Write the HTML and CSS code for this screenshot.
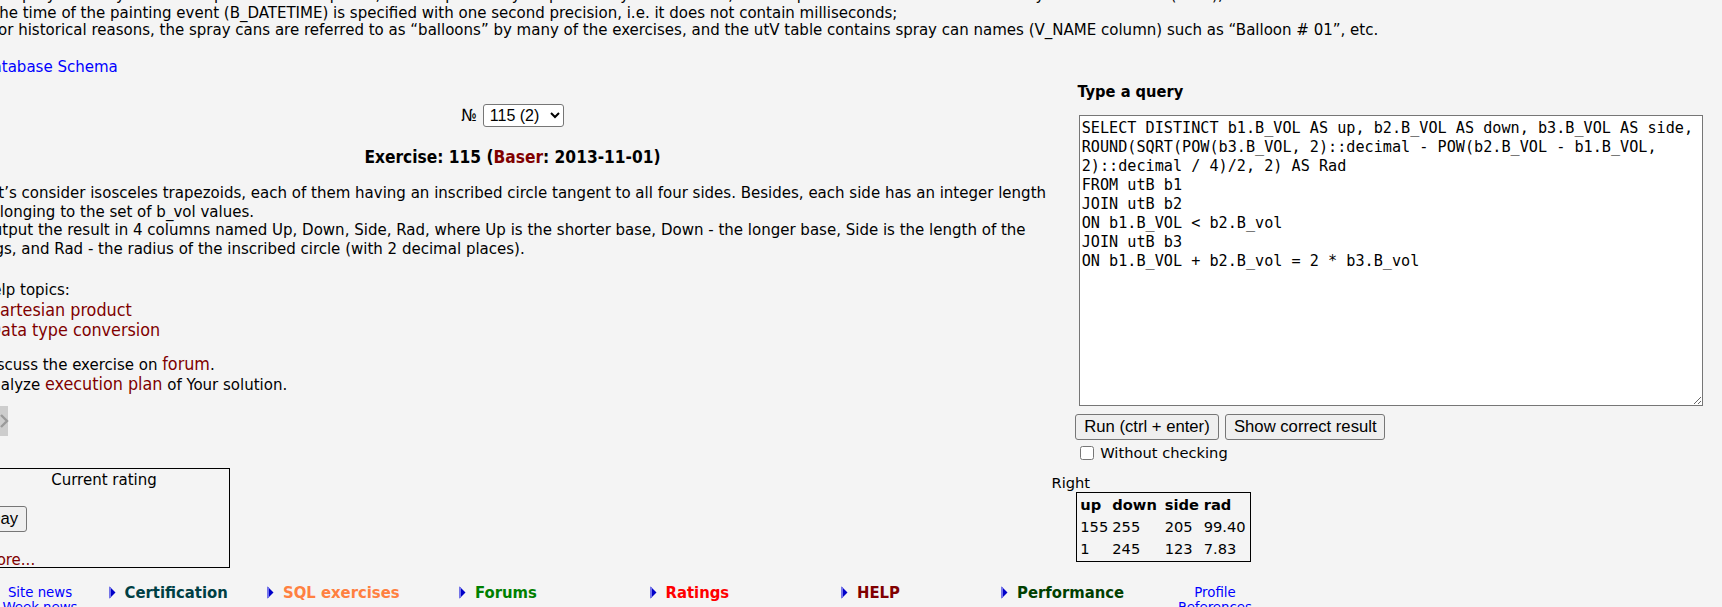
FILE: index.html
```html
<!DOCTYPE html>
<html lang="en">
<head>
<meta charset="utf-8">
<title>SQL exercises - Exercise 115</title>
<link rel="stylesheet" href="styles.css">
</head>
<body>
<div class="page">
  <div class="desc">
    <div class="dl">- a spray can may be used to paint several squares, and a square may be painted by several cans, but the paint volume of each colour may not exceed 255 (0xFF);</div>
    <div class="dl">The time of the painting event (B_DATETIME) is specified with one second precision, i.e. it does not contain milliseconds;</div>
    <div class="dl">For historical reasons, the spray cans are referred to as “balloons” by many of the exercises, and the utV table contains spray can names (V_NAME column) such as “Balloon # 01”, etc.</div>
  </div>
  <div class="schema"><a href="#">Database Schema</a></div>

  <div class="main">
    <div class="left">
      <div class="selrow">
        <span class="num">№</span>
        <select class="exsel"><option>115 (2)</option></select>
      </div>
      <div class="title">Exercise: 115 (<a class="author" href="#">Baser</a>: 2013-11-01)</div>
      <p class="task">Let’s consider isosceles trapezoids, each of them having an inscribed circle tangent to all four sides. Besides, each side has an integer length<br>belonging to the set of b_vol values.<br>Output the result in 4 columns named Up, Down, Side, Rad, where Up is the shorter base, Down - the longer base, Side is the length of the<br>legs, and Rad - the radius of the inscribed circle (with 2 decimal places).</p>
      <div class="help-label">Help topics:</div>
      <div class="topics">
        <a class="mlink" href="#">Cartesian product</a><br>
        <a class="mlink" href="#">Data type conversion</a>
      </div>
      <div class="discuss">
        <div>Discuss the exercise on <a class="mlink" href="#">forum</a>.</div>
        <div>Analyze <a class="mlink" href="#">execution plan</a> of Your solution.</div>
      </div>
      <div class="nextbtn">
        <svg class="chev" width="10" height="16" viewBox="0 0 10 16"><path d="M2 2 L8 8 L2 14" fill="none" stroke="#9a9a9a" stroke-width="2.4"/></svg>
      </div>
      <div class="rating">
        <div class="rt-title">Current rating</div>
        <button class="day">Day</button>
        <div class="more"><a class="mlink2" href="#">more...</a></div>
      </div>
    </div>

    <div class="right">
      <div class="form">
        <div class="tq">Type a query</div>
        <textarea class="query" spellcheck="false">SELECT DISTINCT b1.B_VOL AS up, b2.B_VOL AS down, b3.B_VOL AS side,
ROUND(SQRT(POW(b3.B_VOL, 2)::decimal - POW(b2.B_VOL - b1.B_VOL,
2)::decimal / 4)/2, 2) AS Rad
FROM utB b1
JOIN utB b2
ON b1.B_VOL &lt; b2.B_vol
JOIN utB b3
ON b1.B_VOL + b2.B_vol = 2 * b3.B_vol</textarea>
        <div class="btns">
          <button class="btn run">Run (ctrl + enter)</button>
          <button class="btn show">Show correct result</button>
        </div>
        <label class="chk"><input type="checkbox" class="cb"><span>Without checking</span></label>
      </div>
      <div class="rlabel">Right</div>
      <table class="res">
        <tr><th class="c1">up</th><th class="c2">down</th><th class="c3">side</th><th class="c4">rad</th></tr>
        <tr><td>155</td><td>255</td><td>205</td><td>99.40</td></tr>
        <tr><td>1</td><td>245</td><td>123</td><td>7.83</td></tr>
      </table>
    </div>
  </div>

  <div class="footer">
    <div class="fcell news"><a href="#">Site news</a><br><a href="#">Week news</a></div>
    <div class="fcell w-cert"><svg class="arr" width="7" height="13" viewBox="0 0 7 13"><path d="M0.5 0.5 L6.5 6.5 L0.5 12.5 Z" fill="#0000c8"/><path d="M0.5 0.5 L2 2 L2 11 L0.5 12.5 Z" fill="#7070f0"/></svg><a class="f-cert" href="#">Certification</a></div>
    <div class="fcell w-sql"><svg class="arr" width="7" height="13" viewBox="0 0 7 13"><path d="M0.5 0.5 L6.5 6.5 L0.5 12.5 Z" fill="#0000c8"/><path d="M0.5 0.5 L2 2 L2 11 L0.5 12.5 Z" fill="#7070f0"/></svg><a class="f-sql" href="#">SQL exercises</a></div>
    <div class="fcell w-forum"><svg class="arr" width="7" height="13" viewBox="0 0 7 13"><path d="M0.5 0.5 L6.5 6.5 L0.5 12.5 Z" fill="#0000c8"/><path d="M0.5 0.5 L2 2 L2 11 L0.5 12.5 Z" fill="#7070f0"/></svg><a class="f-forum" href="#">Forums</a></div>
    <div class="fcell w-rate"><svg class="arr" width="7" height="13" viewBox="0 0 7 13"><path d="M0.5 0.5 L6.5 6.5 L0.5 12.5 Z" fill="#0000c8"/><path d="M0.5 0.5 L2 2 L2 11 L0.5 12.5 Z" fill="#7070f0"/></svg><a class="f-rate" href="#">Ratings</a></div>
    <div class="fcell w-help"><svg class="arr" width="7" height="13" viewBox="0 0 7 13"><path d="M0.5 0.5 L6.5 6.5 L0.5 12.5 Z" fill="#0000c8"/><path d="M0.5 0.5 L2 2 L2 11 L0.5 12.5 Z" fill="#7070f0"/></svg><a class="f-help" href="#">HELP</a></div>
    <div class="fcell w-perf"><svg class="arr" width="7" height="13" viewBox="0 0 7 13"><path d="M0.5 0.5 L6.5 6.5 L0.5 12.5 Z" fill="#0000c8"/><path d="M0.5 0.5 L2 2 L2 11 L0.5 12.5 Z" fill="#7070f0"/></svg><a class="f-perf" href="#">Performance</a></div>
    <div class="fcell prof"><a href="#">Profile</a><br><a href="#">References</a></div>
  </div>
</div>
</body>
</html>
```
FILE: styles.css
```css
html, body {
  margin: 0;
  padding: 0;
  overflow: hidden;
  background: #f4f4f4;
}
body {
  font-family: "DejaVu Sans Condensed", "DejaVu Sans", sans-serif;
  font-size: 16.7px;
  color: #000;
}
a { text-decoration: none; }

.page {
  margin: -14px 0 0 -19px;
  width: 1741px;
}

/* description */
.desc {
  padding-left: 9px;
  line-height: 17.7px;
  white-space: nowrap;
}
.schema {
  margin-top: 17.6px;
  line-height: 18px;
}
.schema a { color: #0000ff; }

/* main two columns */
.main {
  display: flex;
  align-items: flex-start;
  margin-top: 7.3px;
}
.left {
  width: 1063px;
  flex: none;
  padding-top: 22.3px;
}
.selrow {
  display: flex;
  justify-content: center;
  align-items: center;
  gap: 6px;
  height: 22.4px;
}
.exsel {
  width: 81px;
  height: 22.4px;
  font-family: "Liberation Sans", Arial, sans-serif;
  font-size: 16px;
  color: #000;
  background: #fff;
  border: 1px solid #767676;
  border-radius: 3px;
  padding: 0 2px;
  margin: 0;
}
.title {
  margin-top: 20px;
  text-align: center;
  font-weight: bold;
  font-size: 17.2px;
  line-height: 20px;
}
.author { color: #800000; }
.task {
  margin: 16.5px 0 0;
  line-height: 18.5px;
  white-space: nowrap;
}
.help-label {
  margin-top: 22.8px;
  line-height: 18.5px;
}
.topics {
  margin-top: 1.5px;
  padding-left: 7.8px;
  line-height: 20px;
}
.mlink {
  color: #800000;
  font-size: 17.8px;
}
.mlink2 { color: #800000; }
.discuss {
  margin-top: 13.7px;
  line-height: 20px;
}
.nextbtn {
  margin-top: 12px;
  width: 26.6px;
  height: 30px;
  background: #cdcdcd;
  display: flex;
  align-items: center;
  justify-content: flex-end;
}
.chev { margin-right: -1px; }

.rating {
  margin-top: 32.7px;
  margin-left: -2.5px;
  width: 251px;
  height: 100px;
  box-sizing: border-box;
  border: 1px solid #000;
}
.rt-title {
  text-align: center;
  line-height: 20px;
}
.day {
  display: block;
  margin-top: 16.7px;
  height: 26px;
  padding: 0 8px;
  font-family: "Liberation Sans", Arial, sans-serif;
  font-size: 16.67px;
  background: #efefef;
  border: 1px solid #767676;
  border-radius: 3px;
  color: #000;
}
.more {
  margin-top: 19.3px;
  line-height: 16px;
  padding-left: 2.5px;
}

/* right column */
.right {
  margin-left: 6px;
  flex: 1;
}
.form { margin-left: 25px; }
.tq {
  font-weight: bold;
  font-size: 16.3px;
  line-height: 20px;
  padding-left: 2.5px;
}
.query {
  display: block;
  margin: 13px 0 0 3.7px;
  width: 624px;
  height: 291px;
  box-sizing: border-box;
  border: 1px solid #767676;
  border-radius: 0;
  padding: 2.5px 2px;
  background: #fff;
  color: #000;
  font-family: "DejaVu Sans Mono", monospace;
  font-size: 15.17px;
  line-height: 19px;
  white-space: pre;
  overflow: hidden;
  resize: both;
}
.btns {
  display: flex;
  gap: 6.6px;
  margin-top: 8px;
  padding-left: 0.3px;
}
.btn {
  height: 26.3px;
  padding: 0;
  font-family: "Liberation Sans", Arial, sans-serif;
  font-size: 16.67px;
  color: #000;
  background: #efefef;
  border: 1px solid #767676;
  border-radius: 3px;
}
.run { width: 143.4px; }
.show { width: 160px; }
.chk {
  display: flex;
  align-items: center;
  margin-top: 3.7px;
  height: 18px;
  font-family: "DejaVu Sans", sans-serif;
  font-size: 14.67px;
}
.cb {
  width: 13.5px;
  height: 13.5px;
  margin: 0 6.4px 0 5.3px;
}
.rlabel {
  margin-top: 12px;
  padding-left: 1.5px;
  line-height: 18px;
  font-family: "DejaVu Sans", sans-serif;
  font-size: 14.67px;
}
.res {
  margin-left: 26.3px;
  border: 1px solid #000;
  border-spacing: 2px;
  font-family: "DejaVu Sans", sans-serif;
  font-size: 14.67px;
  line-height: 18px;
}
.res th, .res td {
  padding: 1px;
  text-align: left;
  white-space: nowrap;
}
.res .c1 { width: 28px; }
.res .c2 { width: 48.4px; }
.res .c3 { width: 35px; }
.res .c4 { width: 43.3px; }

/* footer */
.footer {
  display: flex;
  align-items: flex-start;
  margin-top: 14.6px;
}
.fcell {
  flex: none;
  display: flex;
  align-items: center;
  height: 20px;
  font-weight: bold;
  font-size: 16.5px;
  line-height: 20px;
}
.arr { margin-right: 9px; flex: none; }
.news, .prof {
  display: block;
  height: auto;
  text-align: center;
  font-weight: normal;
  font-size: 14.8px;
  line-height: 15px;
  padding-top: 1.5px;
}
.news a, .prof a { color: #0000ff; }
.news { width: 118px; margin-right: 9.5px; }
.w-cert { width: 158.5px; }
.w-sql { width: 192px; }
.w-forum { width: 190.5px; }
.w-rate { width: 191.5px; }
.w-help { width: 160px; }
.w-perf { width: 169px; }
.prof { width: 90px; }
.f-cert { color: #003f44; }
.f-sql { color: #ff8040; }
.f-forum { color: #008000; }
.f-rate { color: #ff0000; }
.f-help { color: #800000; }
.f-perf { color: #004000; }
```
